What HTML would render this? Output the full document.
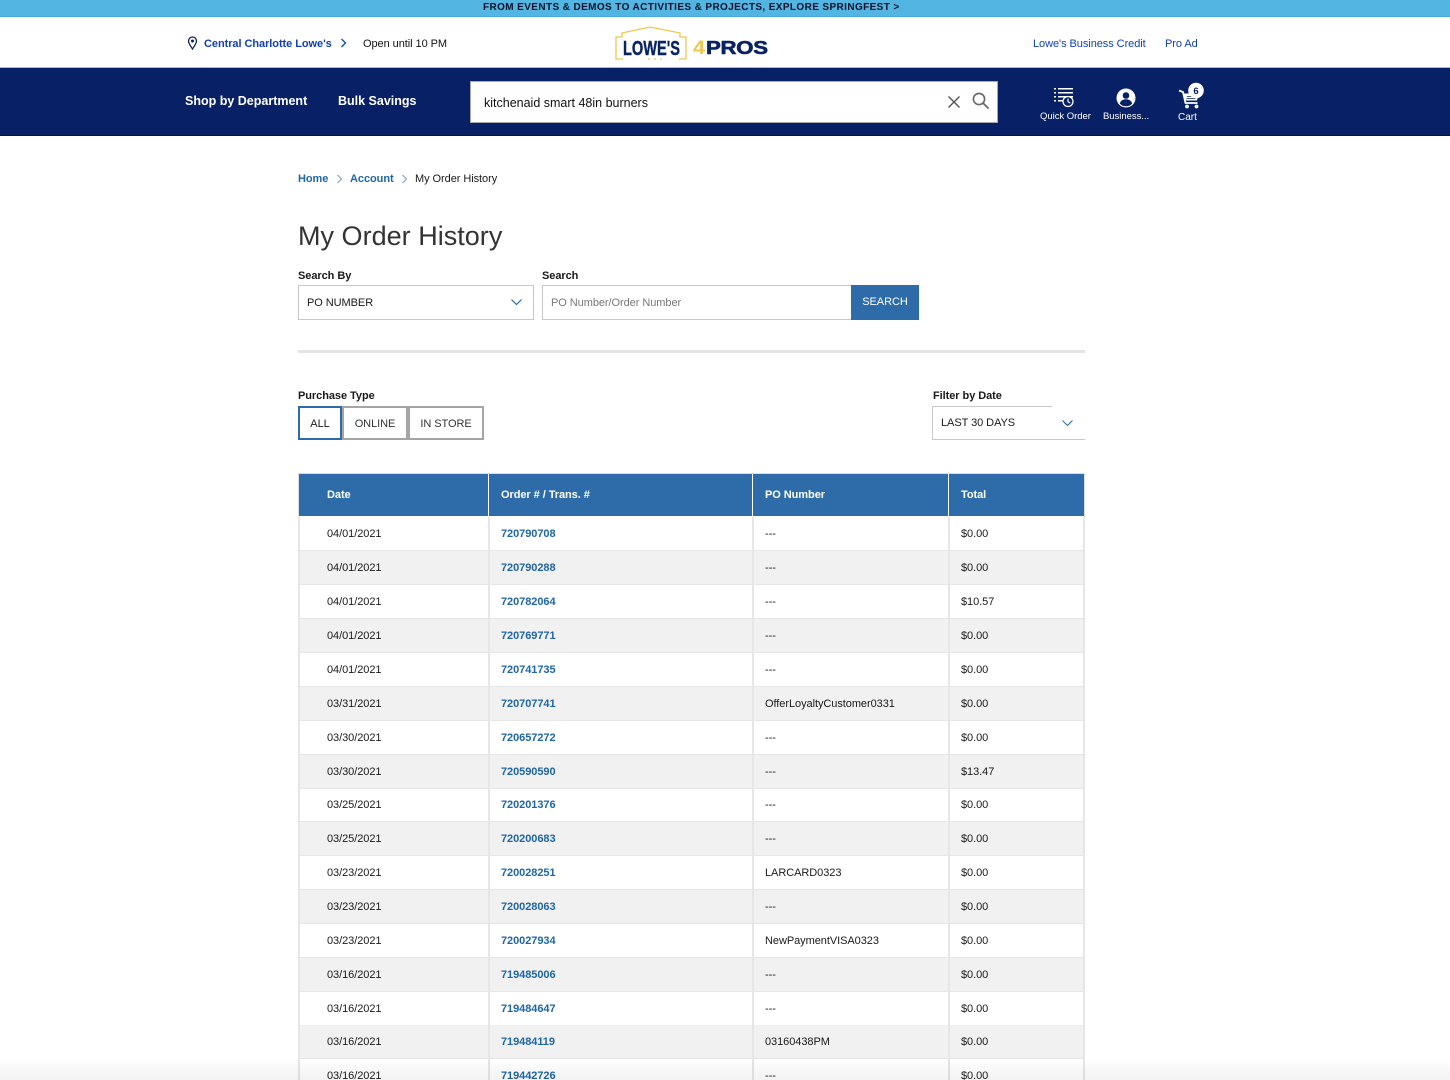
<!DOCTYPE html>
<html lang="en"><head><meta charset="utf-8"><title>My Order History</title>
<style>
html,body{margin:0;padding:0;background:#fff;width:1450px;height:1080px;overflow:hidden}
body{position:relative;font-family:"Liberation Sans",Arial,sans-serif;color:#111;letter-spacing:-.06px}
.a{position:absolute;white-space:nowrap}
.lbl{font-weight:bold;font-size:11px;line-height:14px;color:#1a1a1a;position:absolute;white-space:nowrap}
.row{position:absolute;left:298px;width:787px;height:34px;box-sizing:border-box;border:solid #e6e6e6;border-width:0 2px 1px 2px}
.alt{background:#f1f1f1}
.v{position:absolute;width:2px;top:0;bottom:-1px;background:#e6e6e6}
.row span{position:absolute;top:10px;line-height:14px;font-size:11px;color:#1a1a1a;white-space:nowrap}
.row b{position:absolute;left:201px;top:10px;line-height:14px;font-size:11px;color:#2066a6;white-space:nowrap}
.d{left:27px}.p{left:465px}.m{left:661px}
.th{position:absolute;top:474px;height:42px;background:#2d6ca9;color:#fff;font-weight:bold;font-size:11px;line-height:42px;box-sizing:border-box}
</style></head><body>

<div class="a" style="left:0;top:0;width:1450px;height:17px;background:#52b5e2;border-bottom:1px solid #48aadf;box-sizing:border-box"></div>
<div class="a" style="left:483px;top:2px;font-size:10px;line-height:12px;font-weight:bold;letter-spacing:.39px;color:#07122a">FROM EVENTS &amp; DEMOS TO ACTIVITIES &amp; PROJECTS, EXPLORE SPRINGFEST &gt;</div>

<svg class="a" style="left:187px;top:36px" width="11" height="14" viewBox="0 0 11 14"><path d="M5.500 1C3 1 1.500 2.900 1.500 5c0 2.600 2.600 5.600 4 8 1.400-2.400 4-5.400 4-8 0-2.100-1.500-4-4-4z" fill="none" stroke="#0a2463" stroke-width="1.300"/><circle cx="5.500" cy="5" r="1.500" fill="#0a2463"/></svg>
<div class="a" style="left:204px;top:37px;font-size:11px;line-height:14px;font-weight:bold;color:#1140b8">Central Charlotte Lowe's</div>
<svg class="a" style="left:340px;top:38px" width="8" height="10" viewBox="0 0 8 10"><path d="M1.500 1l4 4-4 4" fill="none" stroke="#1140b8" stroke-width="1.300"/></svg>
<div class="a" style="left:363px;top:37px;font-size:11px;line-height:14px;color:#111">Open until 10 PM</div>

<svg class="a" style="left:615px;top:26px" width="72" height="34" viewBox="0 0 72 34">
<path d="M8 33H1V11H7V7L35 1l30 6v4h6v22H64" fill="#fff" stroke="#eec84f" stroke-width="1.300"/>
<path d="M33 33h2M39 33h2M45 33h2" stroke="#eec84f" stroke-width="1.200"/>
<text x="8" y="29" font-family="Liberation Sans,sans-serif" font-weight="bold" font-size="20" fill="#0a2463" stroke="#0a2463" stroke-width=".4" letter-spacing="0" textLength="57" lengthAdjust="spacingAndGlyphs">LOWE'S</text>
</svg>
<div class="a" style="left:693px;top:38px;font-size:19px;line-height:21px;font-weight:bold;color:#eec84f;letter-spacing:0;transform:scaleX(1.150);transform-origin:0 0">4</div>
<div class="a" style="left:706px;top:38px;font-size:18px;line-height:21px;font-weight:bold;color:#0a2463;-webkit-text-stroke:.6px #0a2463;letter-spacing:-.2px;transform:scaleX(1.230);transform-origin:0 0">PROS</div>

<div class="a" style="left:1033px;top:37px;font-size:11px;line-height:14px;color:#1140b8">Lowe's Business Credit</div>
<div class="a" style="left:1165px;top:37px;font-size:11px;line-height:14px;color:#1140b8">Pro Ad</div>

<div class="a" style="left:0;top:67px;width:1450px;height:69px;background:#082065;border-top:1px solid #aab2cf;border-bottom:1px solid #04123f;box-sizing:border-box"></div>
<div class="a" style="left:185px;top:93px;font-size:12.500px;line-height:16px;font-weight:bold;color:#fff;letter-spacing:0">Shop by Department</div>
<div class="a" style="left:338px;top:93px;font-size:12.500px;line-height:16px;font-weight:bold;color:#fff;letter-spacing:0">Bulk Savings</div>

<div class="a" style="left:470px;top:81px;width:528px;height:42px;background:#fff;border:1px solid #a7a7ad;box-sizing:border-box"></div>
<div class="a" style="left:484px;top:95px;font-size:12.500px;line-height:16px;color:#111;letter-spacing:0">kitchenaid smart 48in burners</div>
<svg class="a" style="left:946px;top:94px" width="16" height="16" viewBox="0 0 16 16"><path d="M2.500 2.500l11 11M13.500 2.500l-11 11" stroke="#555" stroke-width="1.400" fill="none"/></svg>
<svg class="a" style="left:971px;top:91px" width="19" height="19" viewBox="0 0 19 19"><circle cx="8" cy="8" r="5.600" fill="none" stroke="#666" stroke-width="1.600"/><path d="M12 12l5.500 5.500" stroke="#666" stroke-width="1.800"/></svg>

<svg class="a" style="left:1053px;top:87px" width="22" height="22" viewBox="0 0 22 22" fill="#fff">
<rect x="5" y="1" width="15" height="1.500"/><rect x="1" y="1" width="2" height="1.500"/>
<rect x="5" y="5" width="15" height="1.500"/><rect x="1" y="5" width="2" height="1.500"/>
<rect x="5" y="9" width="15" height="1.500"/><rect x="1" y="9" width="2" height="1.500"/>
<rect x="5" y="13" width="6" height="1.500"/><rect x="1" y="13" width="2" height="1.500"/>
<circle cx="15" cy="14.500" r="5" fill="#082065" stroke="#fff" stroke-width="1.300"/><path d="M15 11.500v3.300l2.300 1.200" stroke="#fff" fill="none" stroke-width="1.100"/></svg>
<div class="a" style="left:1040px;top:111px;font-size:9.500px;line-height:12px;color:#fff;letter-spacing:-.03px">Quick Order</div>

<svg class="a" style="left:1116px;top:88px" width="20" height="20" viewBox="0 0 20 20"><circle cx="10" cy="10" r="9.500" fill="#fff"/><circle cx="10" cy="7.500" r="3.300" fill="#082065"/><path d="M3.800 15.500c.8-3 3.300-4.300 6.200-4.300s5.400 1.300 6.200 4.300c-1.500 1.800-3.800 2.800-6.200 2.800s-4.700-1-6.200-2.800z" fill="#082065"/></svg>
<div class="a" style="left:1103px;top:111px;font-size:9.500px;line-height:12px;color:#fff;letter-spacing:-.03px">Business...</div>

<svg class="a" style="left:1177px;top:82px" width="30" height="28" viewBox="0 0 30 28">
<path d="M2 8.500l4 1.500 2.500 11h12" fill="none" stroke="#fff" stroke-width="1.800"/>
<path d="M7 11.500h15l-2 7H8.500z" fill="#fff"/>
<path d="M10 14.500h9M9.500 16.500h9" stroke="#082065" stroke-width=".7"/>
<circle cx="10" cy="24.500" r="1.900" fill="#fff"/><circle cx="19.500" cy="24.500" r="1.900" fill="#fff"/>
<circle cx="19" cy="8.500" r="7.800" fill="#fff"/>
<text x="19" y="11.800" font-family="Liberation Sans,sans-serif" font-weight="bold" font-size="9.500" fill="#082065" text-anchor="middle">6</text></svg>
<div class="a" style="left:1178px;top:112px;font-size:10px;line-height:12px;color:#fff;letter-spacing:0">Cart</div>

<div class="a" style="left:298px;top:172px;font-size:11px;line-height:14px;font-weight:bold;color:#2066a6">Home</div>
<svg class="a" style="left:336px;top:174px" width="7" height="10" viewBox="0 0 7 10"><path d="M1.500 1l4 4-4 4" fill="none" stroke="#7f98b8" stroke-width="1"/></svg>
<div class="a" style="left:350px;top:172px;font-size:11px;line-height:14px;font-weight:bold;color:#2066a6">Account</div>
<svg class="a" style="left:401px;top:174px" width="7" height="10" viewBox="0 0 7 10"><path d="M1.500 1l4 4-4 4" fill="none" stroke="#7f98b8" stroke-width="1"/></svg>
<div class="a" style="left:415px;top:172px;font-size:11px;line-height:14px;color:#1a1a1a">My Order History</div>

<div class="a" style="left:298px;top:219px;font-size:27px;line-height:34px;color:#333;letter-spacing:.02px">My Order History</div>

<div class="lbl" style="left:298px;top:269px">Search By</div>
<div class="lbl" style="left:542px;top:269px">Search</div>
<div class="a" style="left:298px;top:285px;width:236px;height:35px;border:1px solid #c8c8c8;box-sizing:border-box"></div>
<div class="a" style="left:307px;top:296px;font-size:11px;line-height:14px;color:#1a1a1a">PO NUMBER</div>
<svg class="a" style="left:510px;top:298px" width="13" height="9" viewBox="0 0 13 9"><path d="M1.500 1.500l5 5 5-5" fill="none" stroke="#2d6ca9" stroke-width="1.200"/></svg>
<div class="a" style="left:542px;top:285px;width:310px;height:35px;border:1px solid #c8c8c8;box-sizing:border-box"></div>
<div class="a" style="left:551px;top:296px;font-size:11px;line-height:14px;color:#777">PO Number/Order Number</div>
<div class="a" style="left:851px;top:285px;width:68px;height:35px;background:#2d6ca9;color:#fff;font-size:11px;line-height:34px;text-align:center">SEARCH</div>

<div class="a" style="left:298px;top:350px;width:787px;height:3px;background:#e4e4e4"></div>

<div class="lbl" style="left:298px;top:389px">Purchase Type</div>
<div class="a" style="left:298px;top:406px;width:44px;height:34px;border:2px solid #2d6ca9;box-sizing:border-box;font-size:11px;line-height:33px;text-align:center;color:#1a1a1a">ALL</div>
<div class="a" style="left:342px;top:406px;width:66px;height:34px;border:2px solid #a5a5a5;box-sizing:border-box;font-size:11px;line-height:33px;text-align:center;color:#333">ONLINE</div>
<div class="a" style="left:408px;top:406px;width:76px;height:34px;border:2px solid #a5a5a5;box-sizing:border-box;font-size:11px;line-height:33px;text-align:center;color:#333">IN STORE</div>

<div class="lbl" style="left:933px;top:389px">Filter by Date</div>
<div class="a" style="left:932px;top:406px;width:120px;height:1px;background:#c8c8c8"></div>
<div class="a" style="left:932px;top:406px;width:1px;height:34px;background:#c8c8c8"></div>
<div class="a" style="left:932px;top:439px;width:153px;height:1px;background:#c8c8c8"></div>
<div class="a" style="left:941px;top:416px;font-size:11px;line-height:14px;color:#1a1a1a">LAST 30 DAYS</div>
<svg class="a" style="left:1061px;top:419px" width="13" height="9" viewBox="0 0 13 9"><path d="M1.500 1.500l5 5 5-5" fill="none" stroke="#2d6ca9" stroke-width="1.100"/></svg>

<div class="a" style="left:298px;top:473px;width:787px;height:1px;background:#dcdcdc"></div>
<div class="a" style="left:298px;top:473px;width:1px;height:44px;background:#dcdcdc"></div>
<div class="a" style="left:1084px;top:473px;width:1px;height:44px;background:#dcdcdc"></div>
<div class="th" style="left:299px;width:189px;padding-left:28px">Date</div>
<div class="th" style="left:489px;width:263px;padding-left:12px">Order # / Trans. #</div>
<div class="th" style="left:753px;width:195px;padding-left:12px">PO Number</div>
<div class="th" style="left:949px;width:135px;padding-left:12px">Total</div>

<div class="row" style="top:517px"><i class="v" style="left:188px"></i><i class="v" style="left:452px"></i><i class="v" style="left:648px"></i><span class="d">04/01/2021</span><b>720790708</b><span class="p">---</span><span class="m">$0.00</span></div>
<div class="row alt" style="top:551px"><i class="v" style="left:188px"></i><i class="v" style="left:452px"></i><i class="v" style="left:648px"></i><span class="d">04/01/2021</span><b>720790288</b><span class="p">---</span><span class="m">$0.00</span></div>
<div class="row" style="top:585px"><i class="v" style="left:188px"></i><i class="v" style="left:452px"></i><i class="v" style="left:648px"></i><span class="d">04/01/2021</span><b>720782064</b><span class="p">---</span><span class="m">$10.57</span></div>
<div class="row alt" style="top:619px"><i class="v" style="left:188px"></i><i class="v" style="left:452px"></i><i class="v" style="left:648px"></i><span class="d">04/01/2021</span><b>720769771</b><span class="p">---</span><span class="m">$0.00</span></div>
<div class="row" style="top:653px"><i class="v" style="left:188px"></i><i class="v" style="left:452px"></i><i class="v" style="left:648px"></i><span class="d">04/01/2021</span><b>720741735</b><span class="p">---</span><span class="m">$0.00</span></div>
<div class="row alt" style="top:687px"><i class="v" style="left:188px"></i><i class="v" style="left:452px"></i><i class="v" style="left:648px"></i><span class="d">03/31/2021</span><b>720707741</b><span class="p">OfferLoyaltyCustomer0331</span><span class="m">$0.00</span></div>
<div class="row" style="top:721px"><i class="v" style="left:188px"></i><i class="v" style="left:452px"></i><i class="v" style="left:648px"></i><span class="d">03/30/2021</span><b>720657272</b><span class="p">---</span><span class="m">$0.00</span></div>
<div class="row alt" style="top:755px"><i class="v" style="left:188px"></i><i class="v" style="left:452px"></i><i class="v" style="left:648px"></i><span class="d">03/30/2021</span><b>720590590</b><span class="p">---</span><span class="m">$13.47</span></div>
<div class="row" style="top:788px"><i class="v" style="left:188px"></i><i class="v" style="left:452px"></i><i class="v" style="left:648px"></i><span class="d">03/25/2021</span><b>720201376</b><span class="p">---</span><span class="m">$0.00</span></div>
<div class="row alt" style="top:822px"><i class="v" style="left:188px"></i><i class="v" style="left:452px"></i><i class="v" style="left:648px"></i><span class="d">03/25/2021</span><b>720200683</b><span class="p">---</span><span class="m">$0.00</span></div>
<div class="row" style="top:856px"><i class="v" style="left:188px"></i><i class="v" style="left:452px"></i><i class="v" style="left:648px"></i><span class="d">03/23/2021</span><b>720028251</b><span class="p">LARCARD0323</span><span class="m">$0.00</span></div>
<div class="row alt" style="top:890px"><i class="v" style="left:188px"></i><i class="v" style="left:452px"></i><i class="v" style="left:648px"></i><span class="d">03/23/2021</span><b>720028063</b><span class="p">---</span><span class="m">$0.00</span></div>
<div class="row" style="top:924px"><i class="v" style="left:188px"></i><i class="v" style="left:452px"></i><i class="v" style="left:648px"></i><span class="d">03/23/2021</span><b>720027934</b><span class="p">NewPaymentVISA0323</span><span class="m">$0.00</span></div>
<div class="row alt" style="top:958px"><i class="v" style="left:188px"></i><i class="v" style="left:452px"></i><i class="v" style="left:648px"></i><span class="d">03/16/2021</span><b>719485006</b><span class="p">---</span><span class="m">$0.00</span></div>
<div class="row" style="top:992px"><i class="v" style="left:188px"></i><i class="v" style="left:452px"></i><i class="v" style="left:648px"></i><span class="d">03/16/2021</span><b>719484647</b><span class="p">---</span><span class="m">$0.00</span></div>
<div class="row alt" style="top:1025px"><i class="v" style="left:188px"></i><i class="v" style="left:452px"></i><i class="v" style="left:648px"></i><span class="d">03/16/2021</span><b>719484119</b><span class="p">03160438PM</span><span class="m">$0.00</span></div>
<div class="row" style="top:1059px"><i class="v" style="left:188px"></i><i class="v" style="left:452px"></i><i class="v" style="left:648px"></i><span class="d">03/16/2021</span><b>719442726</b><span class="p">---</span><span class="m">$0.00</span></div>

<div class="a" style="left:0;top:1058px;width:1450px;height:22px;background:linear-gradient(to bottom,rgba(0,0,0,0),rgba(0,0,0,.05))"></div>
</body></html>
